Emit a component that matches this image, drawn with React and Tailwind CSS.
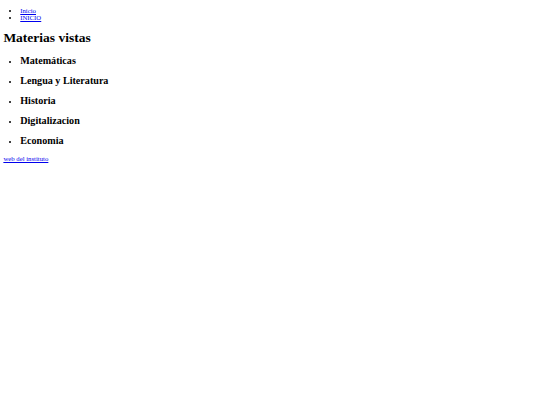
export default function App() {
  return (
    <div className="m-[3.375px] text-[6.75px] leading-[normal] text-black bg-white font-['Liberation_Serif',serif]">
      <ul className="list-disc my-[6.75px] pl-[16.875px]">
        <li>
          <a href="#" className="text-[#0000ee] underline">Inicio</a>
        </li>
        <li>
          <a href="#" className="text-[#0000ee] underline">INICIO</a>
        </li>
      </ul>
      <h1 className="text-[13.5px] font-bold my-[9.05px]">Materias vistas</h1>
      <ul className="list-disc my-[6.75px] pl-[16.875px]">
        {['Matemáticas', 'Lengua y Literatura', 'Historia', 'Digitalizacion', 'Economia'].map((m) => (
          <li key={m}>
            <h2 className="text-[10.125px] font-bold my-[9px]">{m}</h2>
          </li>
        ))}
      </ul>
      <a href="#" className="text-[#0000ee] underline">web del instituto</a>
    </div>
  );
}
